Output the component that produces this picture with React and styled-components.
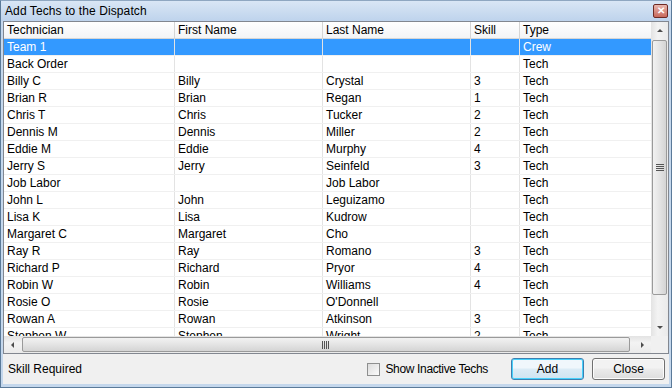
import React from "react";
import styled, { createGlobalStyle } from "styled-components";

const Global = createGlobalStyle`
  html, body { margin: 0; padding: 0; background: #fff; }
  body { font-family: "Liberation Sans", Arial, sans-serif; font-size: 12px; color: #000; }
`;

const Window = styled.div`
  width: 672px; height: 388px; box-sizing: border-box;
  border: 1px solid #5b7a99; border-top-color: #8fa7c1;
  background: #c4d7ec;
  display: flex; flex-direction: column;
  padding: 0 2px 3px 2px;
`;

const TitleBar = styled.div`
  height: 20px; display: flex; align-items: center; justify-content: space-between;
  background: linear-gradient(#d9e6f5, #bed3ec);
  margin: 0 -2px; padding-left: 4px; padding-right: 3px;
`;

const Title = styled.span`
  font-size: 12px; color: #000; letter-spacing: 0.1px;
`;

const CloseX = styled.div`
  width: 15px; height: 14px; box-sizing: border-box;
  border: 1px solid #6e2a24; border-radius: 2px;
  background: linear-gradient(#e9b7ae, #c8685b);
  display: flex; align-items: center; justify-content: center;
  color: #fff; font-size: 10px; font-weight: bold; line-height: 1;
`;

const Body = styled.div`
  flex: 1; background: #f0f0f0; display: flex; flex-direction: column;
`;

const Grid = styled.div`
  height: 333px; box-sizing: border-box; border: 1px solid #828790;
  background: #fff; display: grid;
  grid-template-columns: 1fr 17px; grid-template-rows: 1fr 17px;
`;

const TableArea = styled.div`
  overflow: hidden; display: flex; flex-direction: column;
`;

const cols = "171px 148px 148px 49px 132px";

const HeaderRow = styled.div`
  display: grid; grid-template-columns: ${cols}; height: 17px; flex: none;
  background: linear-gradient(#ffffff, #f3f4f6);
  border-bottom: 1px solid #d5d5d5; box-sizing: border-box;
`;

const HeaderCell = styled.div`
  padding-left: 3px; line-height: 16px; border-right: 1px solid #d5d5d5;
  white-space: nowrap; overflow: hidden;
`;

const Row = styled.div`
  display: grid; grid-template-columns: ${cols}; height: 17px; flex: none;
  box-sizing: border-box; border-bottom: 1px solid #f0f0f0;
  background: ${(p) => (p.$selected ? "#3399ff" : "#fff")};
  color: ${(p) => (p.$selected ? "#fff" : "#000")};
`;

const Cell = styled.div`
  padding-left: 3px; line-height: 16px; white-space: nowrap; overflow: hidden;
  border-right: 1px solid #e3e3e3;
`;

const VScroll = styled.div`
  background: linear-gradient(90deg, #e3e3e3, #f3f3f3 40%, #eaeaea);
  display: flex; flex-direction: column; align-items: center;
`;

const HScroll = styled.div`
  background: linear-gradient(#e3e3e3, #f3f3f3 40%, #eaeaea);
  display: flex; align-items: center;
`;

const Corner = styled.div`background: #f0f0f0;`;

const Arrow = styled.div`
  width: 17px; height: 17px; flex: none; display: flex; align-items: center; justify-content: center;
`;

const VThumb = styled.div`
  width: 15px; height: 255px; box-sizing: border-box; margin-top: 1px;
  border: 1px solid #9a9a9a; border-radius: 2px;
  background: linear-gradient(90deg, #f2f2f2, #e4e4e4 50%, #d4d4d4);
  display: flex; align-items: center; justify-content: center;
`;

const HThumb = styled.div`
  height: 15px; width: 608px; box-sizing: border-box; margin-left: 1px;
  border: 1px solid #9a9a9a; border-radius: 2px;
  background: linear-gradient(#f2f2f2, #e4e4e4 50%, #d4d4d4);
  display: flex; align-items: center; justify-content: center;
`;

const Spacer = styled.div`flex: 1;`;

const Footer = styled.div`
  flex: 1; display: flex; align-items: center; padding: 0 4px 0 5px;
`;

const Label = styled.span`
  font-size: 12px; color: #000;
  letter-spacing: ${(p) => p.$tight ? "-0.35px" : "0"};
`;

const CheckWrap = styled.label`
  display: flex; align-items: center; gap: 5px; margin-right: 23px;
`;

const Box = styled.span`
  width: 13px; height: 13px; box-sizing: border-box; border: 1px solid #8e8f8f;
  background: linear-gradient(135deg, #dcdcdc, #fbfbfb);
`;

const Button = styled.div`
  width: 73px; height: 22px; box-sizing: border-box; border-radius: 3px;
  border: 1px solid ${(p) => (p.$focus ? "#3c7fb1" : "#707070")};
  box-shadow: inset 0 0 0 1px ${(p) => (p.$focus ? "#48d1fb" : "#fcfcfc")};
  background: ${(p) => (p.$focus ? "linear-gradient(#f0f7fc 45%, #dcecf6 50%, #cfe4f1)" : "linear-gradient(#f2f2f2 45%, #ebebeb 50%, #dddddd)")};
  display: flex; align-items: center; justify-content: center;
  margin-left: ${(p) => p.$gap || 0}px;
`;

const rows = [
  ["Team 1", "", "", "", "Crew"],
  ["Back Order", "", "", "", "Tech"],
  ["Billy C", "Billy", "Crystal", "3", "Tech"],
  ["Brian R", "Brian", "Regan", "1", "Tech"],
  ["Chris T", "Chris", "Tucker", "2", "Tech"],
  ["Dennis M", "Dennis", "Miller", "2", "Tech"],
  ["Eddie M", "Eddie", "Murphy", "4", "Tech"],
  ["Jerry S", "Jerry", "Seinfeld", "3", "Tech"],
  ["Job Labor", "", "Job Labor", "", "Tech"],
  ["John L", "John", "Leguizamo", "", "Tech"],
  ["Lisa K", "Lisa", "Kudrow", "", "Tech"],
  ["Margaret C", "Margaret", "Cho", "", "Tech"],
  ["Ray R", "Ray", "Romano", "3", "Tech"],
  ["Richard P", "Richard", "Pryor", "4", "Tech"],
  ["Robin W", "Robin", "Williams", "4", "Tech"],
  ["Rosie O", "Rosie", "O'Donnell", "", "Tech"],
  ["Rowan A", "Rowan", "Atkinson", "3", "Tech"],
  ["Stephen W", "Stephen", "Wright", "2", "Tech"],
];

const Tri = ({ dir }) => {
  const pts = {
    up: "1,5 4,2 7,5",
    down: "1,2 4,5 7,2",
    left: "5,1 2,4 5,7",
    right: "2,1 5,4 2,7",
  }[dir];
  return (
    <svg width="8" height="8" viewBox="0 0 8 8">
      <polygon points={pts} fill="#4d4d4d" />
    </svg>
  );
};

const Grip = ({ vertical }) => (
  <svg width="8" height="8" viewBox="0 0 8 8">
    {[1, 3, 5, 7].map((v) =>
      vertical ? (
        <line key={v} x1="0" x2="8" y1={v - 0.5} y2={v - 0.5} stroke="#555" />
      ) : (
        <line key={v} y1="0" y2="8" x1={v - 0.5} x2={v - 0.5} stroke="#555" />
      )
    )}
  </svg>
);

export default function App() {
  return (
    <>
      <Global />
      <Window>
        <TitleBar>
          <Title>Add Techs to the Dispatch</Title>
          <CloseX>✕</CloseX>
        </TitleBar>
        <Body>
          <Grid>
            <TableArea>
              <HeaderRow>
                {["Technician", "First Name", "Last Name", "Skill", "Type"].map((h) => (
                  <HeaderCell key={h}>{h}</HeaderCell>
                ))}
              </HeaderRow>
              {rows.map((r, i) => (
                <Row key={r[0]} $selected={i === 0}>
                  {r.map((c, j) => (
                    <Cell key={j}>{c}</Cell>
                  ))}
                </Row>
              ))}
            </TableArea>
            <VScroll>
              <Arrow><Tri dir="up" /></Arrow>
              <VThumb><Grip vertical /></VThumb>
              <Spacer />
              <Arrow><Tri dir="down" /></Arrow>
            </VScroll>
            <HScroll>
              <Arrow><Tri dir="left" /></Arrow>
              <HThumb><Grip /></HThumb>
              <Spacer />
              <Arrow><Tri dir="right" /></Arrow>
            </HScroll>
            <Corner />
          </Grid>
          <Footer>
            <Label>Skill Required</Label>
            <Spacer />
            <CheckWrap>
              <Box />
              <Label $tight>Show Inactive Techs</Label>
            </CheckWrap>
            <Button $focus>Add</Button>
            <Button $gap={8}>Close</Button>
          </Footer>
        </Body>
      </Window>
    </>
  );
}
